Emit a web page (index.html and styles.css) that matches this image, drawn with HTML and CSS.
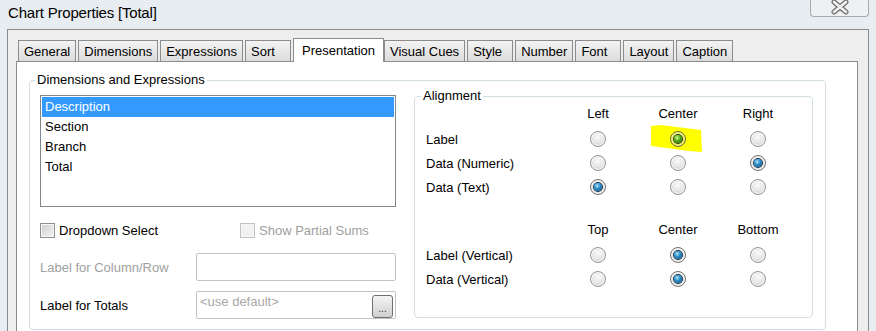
FILE: index.html
```html
<!DOCTYPE html>
<html lang="en">
<head>
  <meta charset="UTF-8">
  <title>Chart Properties [Total]</title>
  <link rel="stylesheet" href="styles.css">
</head>
<body>
  <div class="titlebar">
    <span class="title">Chart Properties [Total]</span>
    <div class="close">
      <svg width="57" height="18" viewBox="0 0 57 18">
        <path d="M23 4 L35 14 M35 4 L23 14" stroke="#6b6b6b" stroke-width="5" stroke-linecap="round" fill="none"/>
        <path d="M23 4 L35 14 M35 4 L23 14" stroke="#f4f4f4" stroke-width="2.6" stroke-linecap="round" fill="none"/>
      </svg>
    </div>
  </div>

  <div class="frame">
    <div class="tabs">
      <div class="tab">General</div>
      <div class="tab">Dimensions</div>
      <div class="tab">Expressions</div>
      <div class="tab">Sort</div>
      <div class="tab active">Presentation</div>
      <div class="tab">Visual Cues</div>
      <div class="tab">Style</div>
      <div class="tab">Number</div>
      <div class="tab">Font</div>
      <div class="tab">Layout</div>
      <div class="tab">Caption</div>
    </div>

    <div class="panel">
      <fieldset class="group outer">
        <legend>Dimensions and Expressions</legend>
        <div class="cols">
          <div class="left">
            <div class="listbox">
              <div class="item selected">Description</div>
              <div class="item">Section</div>
              <div class="item">Branch</div>
              <div class="item">Total</div>
            </div>

            <div class="checks">
              <label class="check"><span class="box"></span>Dropdown Select</label>
              <label class="check disabled"><span class="box"></span>Show Partial Sums</label>
            </div>

            <div class="field disabled">
              <span class="lbl">Label for Column/Row</span>
              <div class="input"></div>
            </div>
            <div class="field totals">
              <span class="lbl">Label for Totals</span>
              <div class="input">
                <span class="placeholder">&lt;use default&gt;</span>
                <span class="dots">...</span>
              </div>
            </div>
          </div>

          <fieldset class="group align">
            <legend>Alignment</legend>
            <div class="row head">
              <span></span><span>Left</span><span>Center</span><span>Right</span>
            </div>
            <div class="row">
              <span class="name">Label</span>
              <span class="cell"><span class="radio"></span></span>
              <span class="cell">
                <svg class="marker" width="52" height="28" viewBox="0 0 52 28">
                  <polygon points="0,1 10,0 50,5 51,27 38,26 0,21" fill="#ffff00"/>
                </svg>
                <span class="radio on lit"></span>
              </span>
              <span class="cell"><span class="radio"></span></span>
            </div>
            <div class="row">
              <span class="name">Data (Numeric)</span>
              <span class="cell"><span class="radio"></span></span>
              <span class="cell"><span class="radio"></span></span>
              <span class="cell"><span class="radio on"></span></span>
            </div>
            <div class="row">
              <span class="name">Data (Text)</span>
              <span class="cell"><span class="radio on"></span></span>
              <span class="cell"><span class="radio"></span></span>
              <span class="cell"><span class="radio"></span></span>
            </div>

            <div class="row head second">
              <span></span><span>Top</span><span>Center</span><span>Bottom</span>
            </div>
            <div class="row">
              <span class="name">Label (Vertical)</span>
              <span class="cell"><span class="radio"></span></span>
              <span class="cell"><span class="radio on"></span></span>
              <span class="cell"><span class="radio"></span></span>
            </div>
            <div class="row">
              <span class="name">Data (Vertical)</span>
              <span class="cell"><span class="radio"></span></span>
              <span class="cell"><span class="radio on"></span></span>
              <span class="cell"><span class="radio"></span></span>
            </div>
          </fieldset>
        </div>
      </fieldset>
    </div>
  </div>
</body>
</html>
```

FILE: styles.css
```css
body {
  margin: 0;
  height: 331px;
  overflow: hidden;
  background: #e8edf1;
  font-family: "Liberation Sans", Arial, sans-serif;
  font-size: 13px;
  color: #000;
}
.titlebar {
  height: 29px;
  display: flex;
  justify-content: space-between;
  align-items: flex-start;
}
.title {
  padding-left: 8px;
  line-height: 26px;
  font-size: 15px;
  letter-spacing: -0.2px;
}
.close {
  width: 59px;
  height: 19px;
  margin-top: -2px;
  margin-right: 7px;
  box-sizing: border-box;
  border: 1px solid #a9a9a9;
  border-top: none;
  border-radius: 0 0 4px 4px;
  background: #eef1f4;
}
.close svg {
  display: block;
}
.frame {
  margin: 0 7px;
  border: 1px solid #8b8b8b;
  border-bottom: none;
  padding: 9px 10px 0 8px;
  background: #eeeeee;
}
.tabs {
  display: flex;
  align-items: flex-end;
  height: 22px;
  padding-left: 2px;
}
.tab {
  height: 21px;
  min-width: 46px;
  box-sizing: border-box;
  padding: 2px 5px 0 5px;
  margin-right: 2px;
  border: 1px solid #8c8c8c;
  border-bottom: none;
  background: linear-gradient(#f3f3f3, #dcdcdc);
  line-height: 17px;
}
.tab.active {
  position: relative;
  z-index: 1;
  height: 24px;
  margin: 0 0 -1px 0;
  padding: 3px 8px 0 8px;
  background: #fff;
}
.panel {
  background: #fff;
  border: 1px solid #8c8c8c;
  padding: 10px 31px 10px 12px;
}
.group {
  margin: 0;
  border: 1px solid #d3dde4;
  border-radius: 4px;
  min-width: 0;
}
.group legend {
  margin-left: -5px;
  padding: 0 2px;
  line-height: 16px;
}
.outer {
  padding: 0 12px 10px 10px;
}
.cols {
  display: flex;
  align-items: flex-start;
  gap: 18px;
}
.left {
  width: 356px;
  margin-top: 7px;
}
.listbox {
  height: 112px;
  box-sizing: border-box;
  border: 1px solid #82878c;
  padding: 1px;
}
.item {
  height: 20px;
  line-height: 20px;
  padding-left: 3px;
}
.item.selected {
  background: #3399ff;
  color: #fff;
}
.checks {
  display: flex;
  margin-top: 16px;
  height: 15px;
}
.check {
  display: flex;
  align-items: center;
  gap: 4px;
  flex: 0 0 200px;
  line-height: 15px;
}
.check.disabled {
  flex: 1;
  color: #a0a0a0;
}
.box {
  width: 15px;
  height: 15px;
  box-sizing: border-box;
  border: 1px solid #8e8f8f;
  background: linear-gradient(135deg, #cfcfcf, #f3f3f3);
  box-shadow: inset 0 0 0 1px #f6f6f6;
}
.check.disabled .box {
  border-color: #c2c2c2;
  background: #f1f1f1;
}
.field {
  display: flex;
  align-items: center;
  margin-top: 15px;
}
.field.totals {
  margin-top: 10px;
}
.lbl {
  width: 156px;
}
.field.disabled .lbl {
  color: #a0a0a0;
}
.input {
  flex: 1;
  height: 28px;
  box-sizing: border-box;
  border: 1px solid #c3c3c3;
  border-radius: 2px;
  display: flex;
  align-items: flex-start;
  padding: 2px 2px 0 3px;
}
.placeholder {
  flex: 1;
  color: #a8a8a8;
  line-height: 16px;
}
.dots {
  width: 21px;
  height: 23px;
  margin-top: 1px;
  box-sizing: border-box;
  border: 1px solid #6f6f6f;
  border-radius: 3px;
  background: linear-gradient(#f4f4f4, #cfcfcf);
  font-size: 10px;
  line-height: 26px;
  text-align: center;
  color: #333;
}
.align {
  flex: 1;
  padding: 0 14px 26px 11px;
}
.row {
  display: grid;
  grid-template-columns: 132px 80px 80px 80px;
  height: 24px;
  align-items: center;
}
.row.head {
  height: 18px;
  margin-bottom: 5px;
  text-align: center;
}
.row.head.second {
  margin-top: 21px;
}
.cell {
  position: relative;
  display: flex;
  justify-content: center;
  align-items: center;
}
.marker {
  position: absolute;
  left: 13px;
  top: -6px;
}
.radio {
  position: relative;
  width: 16px;
  height: 16px;
  box-sizing: border-box;
  border-radius: 50%;
  border: 1px solid #939393;
  background: radial-gradient(circle at 50% 35%, #fbfbfb 0%, #e4e4e4 55%, #c6c6c6 100%);
  box-shadow: inset 0 0 0 1px #fafafa;
}
.radio.on {
  border-color: #6e6e6e;
}
.radio.on::after {
  content: "";
  position: absolute;
  left: 3px;
  top: 3px;
  width: 8px;
  height: 8px;
  border-radius: 50%;
  background: radial-gradient(circle at 40% 35%, #b4e6ff 0%, #2d8fcb 40%, #07466f 100%);
  box-shadow: 0 0 0 1px #17384d;
}
.radio.lit {
  border-color: #6b6b2e;
  background: radial-gradient(circle at 50% 35%, #fbfb9a 0%, #e4e45a 60%, #b8b840 100%);
  box-shadow: inset 0 0 0 1px #f6f690;
}
.radio.lit::after {
  background: radial-gradient(circle at 40% 35%, #d4ff9c 0%, #4cab12 45%, #1b4d00 100%);
  box-shadow: 0 0 0 1px #2d3d10;
}
```
